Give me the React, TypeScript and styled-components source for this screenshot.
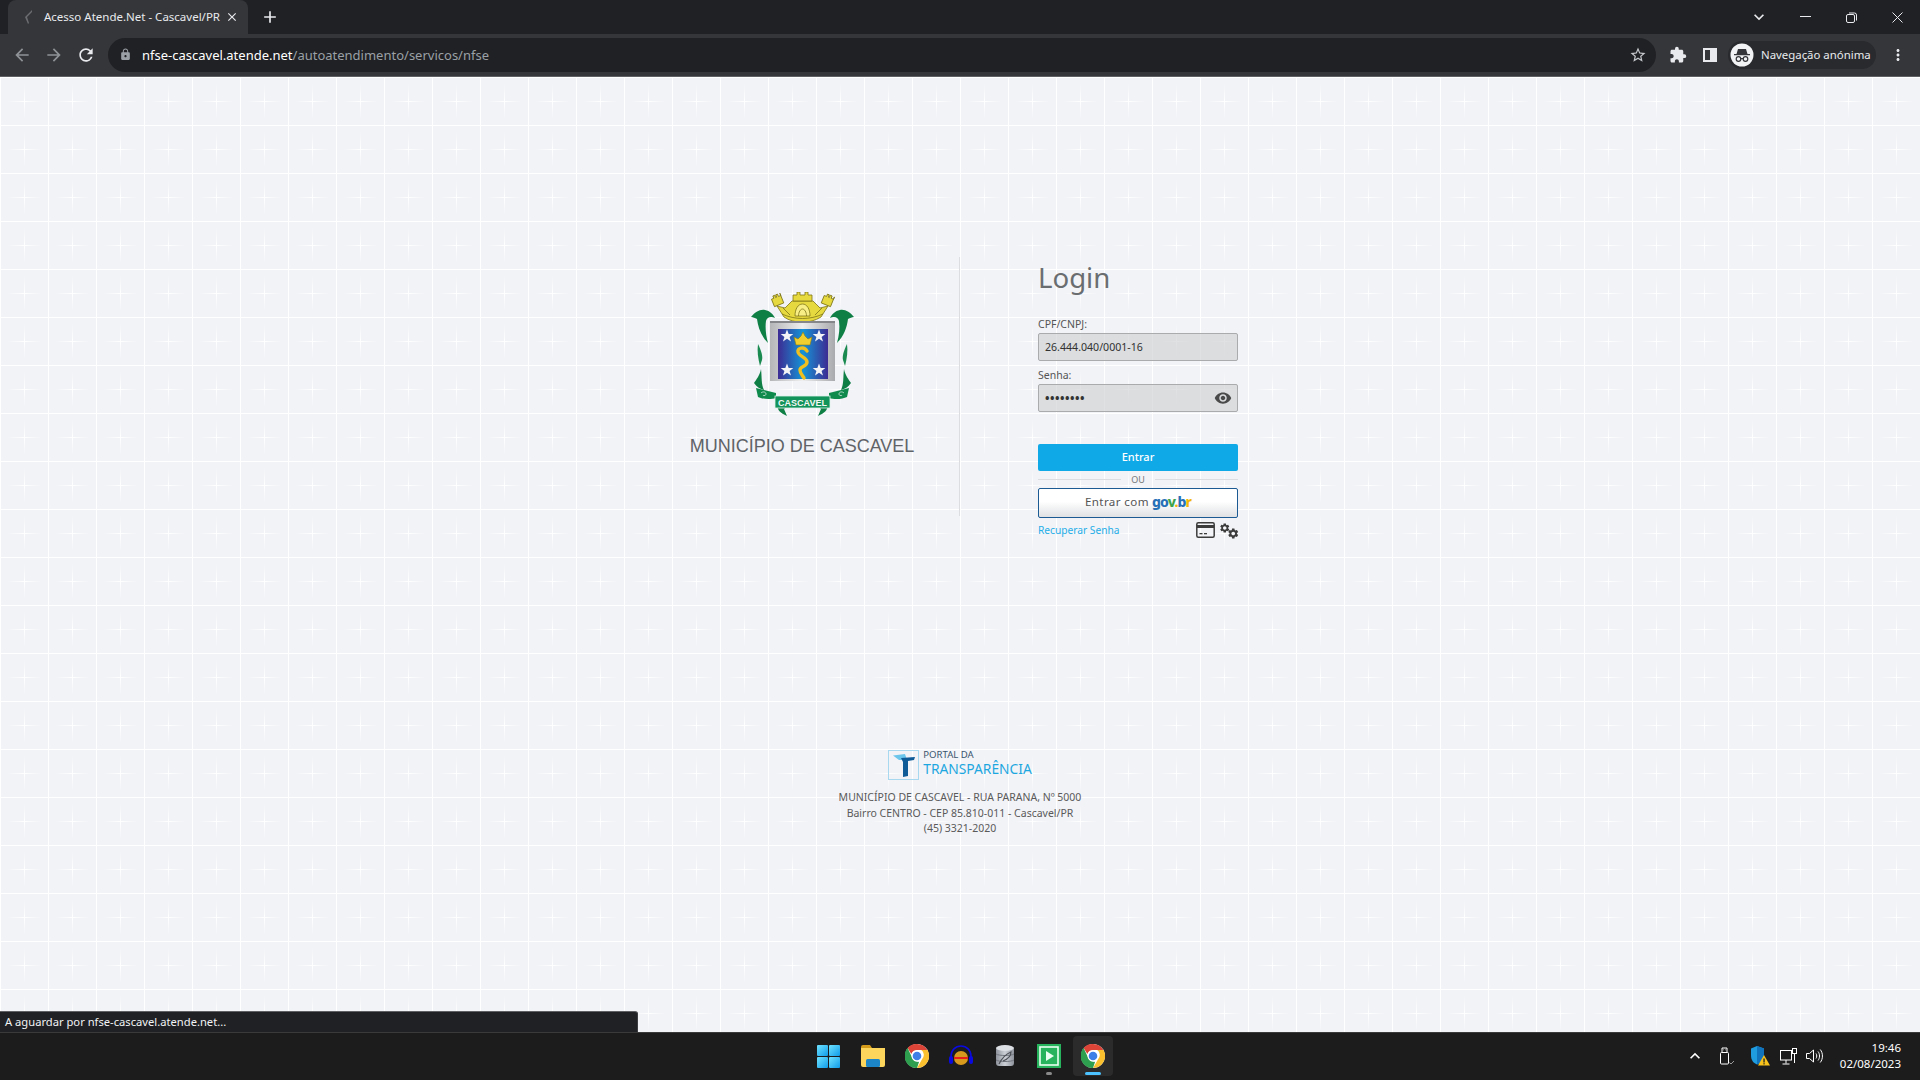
import React from "react";
import styled, { createGlobalStyle } from "styled-components";
import {
  MdArrowBack,
  MdArrowForward,
  MdClose,
  MdExtension,
  MdLock,
  MdMoreVert,
  MdRefresh,
  MdSettings,
  MdStarBorder,
  MdVisibility,
  MdAdd,
  MdKeyboardArrowDown,
  MdKeyboardArrowUp,
} from "react-icons/md";

const GlobalStyle = createGlobalStyle`
  html, body {
    margin: 0;
    padding: 0;
    background: #f2f3f7;
  }
  * { box-sizing: border-box; }
`;

const Screen = styled.div`
  position: relative;
  display: flex;
  flex-direction: column;
  width: 1920px;
  height: 1080px;
  overflow: hidden;
  font-family: "Noto Sans", sans-serif;
`;

/* ---- browser chrome ---- */

const TabStrip = styled.div`
  display: flex;
  align-items: flex-end;
  height: 34px;
  padding-left: 8px;
  background: #202124;
`;

const Tab = styled.div`
  display: flex;
  align-items: center;
  width: 240px;
  height: 34px;
  padding: 0 9px 1px 15px;
  background: #35363a;
  border-radius: 8px 8px 0 0;
  color: #e8eaed;
  font-size: 11.5px;
  white-space: nowrap;
`;

const TabTitle = styled.span`
  flex: 1;
  margin-left: 11px;
`;

const NewTab = styled.div`
  display: flex;
  align-items: center;
  justify-content: center;
  width: 20px;
  height: 34px;
  margin-left: 12px;
  color: #e8eaed;
  font-size: 20px;
`;

const WindowControls = styled.div`
  display: flex;
  align-items: center;
  height: 34px;
  margin-left: auto;
  color: #e8eaed;
`;

const WindowButton = styled.div<{ $w?: number }>`
  display: flex;
  align-items: center;
  justify-content: center;
  width: ${({ $w }) => $w ?? 46}px;
  height: 28px;
`;

const Toolbar = styled.div`
  display: flex;
  align-items: center;
  height: 43px;
  padding: 0 0 1px 6px;
  background: #35363a;
  border-bottom: 1px solid #5f6063;
`;

const NavButton = styled.div<{ $dim?: boolean }>`
  display: flex;
  align-items: center;
  justify-content: center;
  width: 32px;
  height: 32px;
  color: ${({ $dim }) => ($dim ? "#8f9296" : "#e8eaed")};
  font-size: 20px;
`;

const Omnibox = styled.div`
  display: flex;
  align-items: center;
  flex: 0 0 1548px;
  height: 34px;
  margin-left: 6px;
  padding: 0 9px 0 11px;
  background: #202124;
  border-radius: 17px;
  font-size: 13px;
  color: #9aa0a6;
`;

const LockIcon = styled(MdLock)`
  color: #9aa0a6;
  font-size: 13px;
  margin-right: 10px;
`;

const Host = styled.span`
  color: #fff;
`;

const StarIcon = styled(MdStarBorder)`
  margin-left: auto;
  color: #c5c8cc;
  font-size: 18px;
`;

const ToolIcon = styled.div<{ $ml: number }>`
  display: flex;
  align-items: center;
  justify-content: center;
  width: 20px;
  height: 20px;
  margin-left: ${({ $ml }) => $ml}px;
  color: #e8eaed;
  font-size: 18px;
`;

const ProfileChip = styled.div`
  display: flex;
  align-items: center;
  width: 148px;
  height: 28px;
  margin-left: 8px;
  padding-left: 2px;
  border-radius: 14px;
  background: #292a2d;
  color: #e8eaed;
  font-size: 11.4px;
  white-space: nowrap;
`;

const ProfileName = styled.span`
  margin-left: 7px;
`;

const SidePanelGlyph = styled.div`
  width: 14px;
  height: 14px;
  border: 2px solid #e8eaed;
  border-right-width: 7px;
  background: #35363a;
`;

/* ---- page ---- */

const Page = styled.main`
  flex: 1;
  display: flex;
  flex-direction: column;
  background-color: #f2f3f7;
  background-image:
    linear-gradient(90deg, #fff 1px, transparent 1px),
    linear-gradient(180deg, #fff 1px, transparent 1px),
    radial-gradient(ellipse 17px 1px at 24.5px 24.5px, #ffffff, rgba(255, 255, 255, 0)),
    radial-gradient(ellipse 1px 17px at 24.5px 24.5px, #ffffff, rgba(255, 255, 255, 0));
  background-size: 48px 48px;
`;

const LoginGrid = styled.section`
  display: grid;
  grid-template-columns: 1fr 1fr;
  align-items: start;
  margin-top: 180px;
  height: 259px;
`;

const BrandPanel = styled.div`
  justify-self: end;
  display: flex;
  flex-direction: column;
  align-items: center;
  width: 316px;
  height: 259px;
  padding: 35px 0 0 1px;
  border-right: 1px solid #dcdde1;
`;

const BrandName = styled.div`
  margin-top: 19px;
  color: #5f6368;
  font-family: "Liberation Sans", sans-serif;
  font-size: 18px;
  line-height: 22px;
  white-space: nowrap;
`;

const FormPanel = styled.div`
  display: flex;
  flex-direction: column;
  width: 278px;
  padding-left: 78px;
`;

const Title = styled.h1`
  margin: 0 0 17px;
  height: 41px;
  color: #6a6d70;
  font-size: 27.6px;
  font-weight: 400;
  line-height: 40px;
`;

const Field = styled.div`
  display: flex;
  flex-direction: column;
  margin-bottom: 5px;
`;

const Label = styled.label`
  height: 18px;
  color: #555;
  font-size: 10.5px;
  line-height: 18px;
`;

const InputBox = styled.div`
  display: flex;
  align-items: center;
  justify-content: space-between;
  height: 28px;
  padding: 0 5px 0 6px;
  background: rgba(205, 206, 209, 0.62);
  border: 1px solid #a9abad;
  border-radius: 2px;
  color: #333;
  font-size: 10.6px;
`;

const Dots = styled.span`
  font-size: 12px;
  font-weight: 700;
  letter-spacing: 0.5px;
`;

const EyeIcon = styled(MdVisibility)`
  color: #4a4a4a;
  font-size: 18px;
`;

const PrimaryButton = styled.button`
  height: 27px;
  margin-top: 27px;
  padding: 0 0 2px;
  background: #10a9e7;
  border: none;
  border-radius: 2px;
  color: #fff;
  font: 500 11px "Noto Sans", sans-serif;
`;

const OrRow = styled.div`
  display: flex;
  align-items: center;
  gap: 10px;
  height: 17px;
  padding-bottom: 1px;
  color: #777;
  font-size: 9px;

  &::before,
  &::after {
    content: "";
    flex: 1;
    height: 1px;
    background: #dcdde0;
  }
`;

const GovButton = styled.button`
  display: flex;
  align-items: center;
  justify-content: center;
  gap: 3px;
  height: 30px;
  padding: 0 0 3px;
  background: linear-gradient(180deg, #fff 45%, #dfe1e3 100%);
  border: 1px solid #1c5a94;
  border-radius: 2px;
  color: #555;
  font: 400 11.6px "Noto Sans", sans-serif;
  letter-spacing: 0.4px;
`;

const GovLogo = styled.span`
  font-family: "Noto Sans", sans-serif;
  font-size: 14px;
  font-weight: 800;
  letter-spacing: -0.9px;
`;

const GovLetter = styled.span<{ $c: string }>`
  color: ${({ $c }) => $c};
`;

const LinkRow = styled.div`
  display: flex;
  align-items: center;
  justify-content: space-between;
  height: 24px;
`;

const RecoverLink = styled.a`
  color: #26aee8;
  font-size: 10.2px;
`;

const RowIcons = styled.div`
  display: flex;
  align-items: center;
  gap: 4px;
  color: #3c3c3c;
`;

const GearPair = styled.div`
  display: flex;
  width: 20px;
  height: 20px;
  padding-top: 2px;
  margin-right: -1px;
`;

const GearSmall = styled(MdSettings)`
  font-size: 12px;
`;

const GearLarge = styled(MdSettings)`
  font-size: 13px;
  margin: 5px 0 0 -4px;
`;

const Footer = styled.footer`
  display: flex;
  flex-direction: column;
  align-items: center;
  margin-top: 234px;
`;

const PortalLogo = styled.div`
  display: flex;
  align-items: center;
  height: 30px;
  margin-bottom: 10px;
`;

const PortalMark = styled.div`
  display: flex;
  align-items: center;
  justify-content: center;
  width: 31px;
  height: 30px;
  border: 1px solid #a8d8ef;
`;

const PortalWords = styled.div`
  display: flex;
  flex-direction: column;
  margin-left: 4px;
  padding-bottom: 2px;
`;

const PortalSmall = styled.span`
  color: #39556e;
  font-size: 9.6px;
  line-height: 10px;
`;

const PortalBig = styled.span`
  color: #1da7e0;
  font-size: 13.8px;
  line-height: 18px;
`;

const Address = styled.div`
  color: #5a5a5a;
  font-size: 10.5px;
  line-height: 15.5px;
  text-align: center;
`;

const StatusBubble = styled.div`
  position: absolute;
  left: 0;
  bottom: 48px;
  width: 638px;
  height: 21px;
  padding-left: 5px;
  background: #202124;
  border-top: 1px solid #5f6063;
  border-right: 1px solid #3c3d40;
  border-top-right-radius: 3px;
  color: #f1f3f4;
  font-size: 11.2px;
  line-height: 19px;
`;

/* ---- taskbar ---- */

const Taskbar = styled.div`
  display: grid;
  grid-template-columns: 1fr auto 1fr;
  align-items: center;
  height: 48px;
  padding-bottom: 1px;
  background: #1c1c1c;
  border-top: 1px solid #3a3a3a;
`;

const TaskIcons = styled.div`
  grid-column: 2;
  display: flex;
  gap: 4px;
  margin-left: 1px;
`;

const TaskTile = styled.div<{ $active?: boolean }>`
  position: relative;
  display: flex;
  align-items: center;
  justify-content: center;
  width: 40px;
  height: 40px;
  border-radius: 4px;
  background: ${({ $active }) => ($active ? "#2b2b2b" : "transparent")};
`;

const RunDot = styled.span<{ $active?: boolean }>`
  position: absolute;
  left: 50%;
  bottom: 1px;
  width: ${({ $active }) => ($active ? 16 : 6)}px;
  height: 3px;
  margin-left: ${({ $active }) => ($active ? -8 : -3)}px;
  border-radius: 2px;
  background: ${({ $active }) => ($active ? "#4cc2ff" : "#8a8a8a")};
`;

const Tray = styled.div`
  grid-column: 3;
  justify-self: end;
  display: flex;
  align-items: center;
  padding-right: 19px;
  color: #fff;
`;

const TrayItem = styled.div<{ $w: number }>`
  display: flex;
  align-items: center;
  justify-content: center;
  width: ${({ $w }) => $w}px;
  height: 32px;
`;

const Clock = styled.div`
  width: 74px;
  color: #fff;
  font-size: 11.5px;
  line-height: 16px;
  text-align: right;
`;

/* ---- drawings ---- */

const ChromeLogo = ({ size = 24 }: { size?: number }) => (
  <svg width={size} height={size} viewBox="0 0 48 48">
    <circle cx="24" cy="24" r="24" fill="#fff" />
    <path d="M24 0a24 24 0 0 1 20.8 12H24a12 12 0 0 0-11.3 7.9L5.2 8.2A24 24 0 0 1 24 0z" fill="#db4437" />
    <path d="M44.8 12A24 24 0 0 1 24 48l10.4-18a12 12 0 0 0-2-18z" fill="#fbc02d" />
    <path d="M5.2 8.2 15.6 30a12 12 0 0 0 12.6 5.3L24 48A24 24 0 0 1 5.2 8.2z" fill="#2e9e4f" />
    <circle cx="24" cy="24" r="11" fill="#fff" />
    <circle cx="24" cy="24" r="8.6" fill="#3d7fe6" />
  </svg>
);

const Star = ({ x, y }: { x: number; y: number }) => (
  <polygon
    transform={`translate(${x} ${y})`}
    points="0,-6.5 1.7,-2 6.3,-2 2.6,0.9 4,5.5 0,2.8 -4,5.5 -2.6,0.9 -6.3,-2 -1.7,-2"
    fill="#f4f4f6"
  />
);

const MantleSide = () => (
  <g fill="#0f7f46">
    <path d="M1 25C5 20 10 17 15 18c5 1 8 4 10 8-4-2-8-1-9 3-1 7 0 15 2 22-7-7-10-16-11-24-2-1-4-2-6-2z" />
    <path d="M8 52c3 6 5 12 4 16l-2 6c-2-8-3-15-2-22z" fill="#1a8a50" />
    <path d="M11 77c-1 6-5 11-7 14 3 4 6 6 10 7-3-6-2-13-3-21z" />
    <path d="M6 96l20 5v5c-6 2-14 1-18-1z" fill="#0f8a4d" />
    <path d="M11 101c2-2 5-1 5 1s-3 2-3 1" fill="none" stroke="#cfe9da" strokeWidth="0.8" />
    <path d="M27 114c1 4 3 7 10 10l-3-7 3-3z" />
  </g>
);

const CrownTower = ({ x, tilt }: { x: number; tilt: number }) => (
  <g transform={`rotate(${tilt} ${x} 10)`}>
    <path d={`M${x - 5} 13V5h2.500V2.500h2V5h1V2.500h2V5h2.500V2.500h0V13z`} />
  </g>
);

const Emblem = () => (
  <svg width="105" height="124" viewBox="0 0 105 124">
    <defs>
      <linearGradient id="fieldBlue" x1="0" x2="1" y1="0" y2="0">
        <stop offset="0" stopColor="#3d2c93" />
        <stop offset="0.5" stopColor="#1594d6" />
        <stop offset="1" stopColor="#3d2c93" />
      </linearGradient>
      <linearGradient id="silver" x1="0" x2="1" y1="0" y2="0">
        <stop offset="0" stopColor="#b5b6b8" />
        <stop offset="0.5" stopColor="#eeeeef" />
        <stop offset="1" stopColor="#a9aaad" />
      </linearGradient>
    </defs>
    {/* crown */}
    <g fill="#e6d93f" stroke="#7d7518" strokeWidth="0.8">
      <CrownTower x={28} tilt={-22} />
      <CrownTower x={77} tilt={22} />
      <path d="M27 14l8 2 7-7h21l7 7 8-2-7 11c-11 7-27 7-37 0z" />
      <path d="M43 9V3h4V0h3v3h5V0h3v3h4v6z" />
      <path d="M45 24c0-7 3-12 7.500-12S60 17 60 24z" fill="#f8ee86" />
      <path d="M48.500 24c0-4 2-7 4-7s4 3 4 7M33 16l7 7M72 16l-7 7M32 22c13 6 28 6 41 0" fill="none" />
    </g>
    {/* mantling, the right side mirrors the left */}
    <MantleSide />
    <g transform="translate(105 0) scale(-1 1)">
      <MantleSide />
    </g>
    {/* shield */}
    <rect x="20" y="29" width="65" height="60" fill="url(#silver)" />
    <rect x="20" y="29" width="65" height="2" fill="#85868a" />
    <rect x="28" y="37" width="50" height="50" fill="url(#fieldBlue)" />
    <Star x={37} y={44} />
    <Star x={69} y={44} />
    <Star x={37} y={78} />
    <Star x={69} y={78} />
    <path d="M44 45l4 2 3-3 2-4 2 4 3 3 4-2-2 8H46z" fill="#f0cf2f" stroke="#8d7b12" strokeWidth="0.6" />
    <path d="M57 59c-3-5-10-3-9 1 1 5 9 5 9 10 0 5-7 4-7 8 0 4 3 6 4 8" fill="none" stroke="#f0c020" strokeWidth="3.400" strokeLinecap="round" />
    {/* ribbon label */}
    <rect x="25" y="104" width="55" height="12" fill="#12935a" stroke="#dff3e8" strokeWidth="0.8" />
    <text x="52.500" y="113.500" textAnchor="middle" fontFamily="Liberation Sans, sans-serif" fontWeight="700" fontSize="9" fill="#f2f7f4">
      CASCAVEL
    </text>
  </svg>
);

const CardGlyph = () => (
  <svg width="19" height="16" viewBox="0 0 19 16">
    <rect x="0.800" y="0.800" width="17.400" height="14.400" rx="1.500" fill="none" stroke="#3c3c3c" strokeWidth="1.500" />
    <rect x="1" y="3" width="17" height="3" fill="#3c3c3c" />
    <rect x="3.500" y="11" width="3" height="1.300" fill="#3c3c3c" />
    <rect x="8" y="11" width="3" height="1.300" fill="#3c3c3c" />
  </svg>
);

const PortalGlyph = () => (
  <svg width="22" height="26" viewBox="0 0 22 26">
    <path d="M0 3.500 12 2l2 6H6z" fill="#6cc6ec" />
    <path d="M8 6l14-1-1 3-6 1v15l-5 1V10z" fill="#0f5b98" />
  </svg>
);

const SideSpinner = () => (
  <svg width="10" height="16" viewBox="0 0 10 16">
    <path d="M9 1 2 8l3 7 1-1-2-6 5-5z" fill="#6b6d70" />
  </svg>
);

const IncognitoAvatar = () => (
  <svg width="24" height="24" viewBox="0 0 24 24">
    <circle cx="12" cy="12" r="11.500" fill="#f1f3f4" />
    <path d="M8 6h8l1.500 5H20v1.200H4V11h2.500z" fill="#35363a" />
    <circle cx="8.500" cy="16" r="2.300" fill="none" stroke="#35363a" strokeWidth="1.200" />
    <circle cx="15.500" cy="16" r="2.300" fill="none" stroke="#35363a" strokeWidth="1.200" />
    <path d="M10.800 15.600h2.400" stroke="#35363a" strokeWidth="1.200" />
  </svg>
);

const RestoreGlyph = () => (
  <svg width="11" height="11" viewBox="0 0 11 11" fill="none" stroke="#e8eaed" strokeWidth="1">
    <rect x="0.500" y="2.500" width="8" height="8" rx="1.500" />
    <path d="M3 1h5.500a2 2 0 0 1 2 2v5.500" />
  </svg>
);

const MinimizeGlyph = () => (
  <svg width="11" height="2" viewBox="0 0 11 2">
    <rect width="11" height="1" fill="#e8eaed" />
  </svg>
);

const CloseGlyph = () => (
  <svg width="11" height="11" viewBox="0 0 11 11" stroke="#e8eaed" strokeWidth="1">
    <path d="M.5.5l10 10M10.500.5l-10 10" />
  </svg>
);

const WindowsLogo = () => (
  <svg width="23" height="23" viewBox="0 0 23 23">
    <defs>
      <linearGradient id="win" x1="0" y1="0" x2="1" y2="1">
        <stop offset="0" stopColor="#6fe3ff" />
        <stop offset="1" stopColor="#0f9be8" />
      </linearGradient>
    </defs>
    <rect width="11" height="11" rx="1" fill="url(#win)" />
    <rect x="12" width="11" height="11" rx="1" fill="url(#win)" />
    <rect y="12" width="11" height="11" rx="1" fill="url(#win)" />
    <rect x="12" y="12" width="11" height="11" rx="1" fill="url(#win)" />
  </svg>
);

const FolderIcon = () => (
  <svg width="24" height="22" viewBox="0 0 24 22">
    <path d="M0 2a2 2 0 0 1 2-2h7l2 3h-11z" fill="#d49b1a" />
    <path d="M0 3h24v17a2 2 0 0 1-2 2H2a2 2 0 0 1-2-2z" fill="#fcd65c" />
    <rect x="5" y="14" width="14" height="8" rx="1.500" fill="#1b85c8" />
  </svg>
);

const AudioIcon = () => (
  <svg width="24" height="22" viewBox="0 0 24 22">
    <circle cx="12" cy="13" r="7" fill="#d89a1d" />
    <path d="M5 12h14v2H5z" fill="#e8201a" />
    <path d="M2 15V11a10 10 0 0 1 20 0v4" fill="none" stroke="#0a0ae0" strokeWidth="1.600" />
    <rect x="0" y="11" width="4" height="8" rx="2" fill="#0a0ae0" />
    <rect x="20" y="11" width="4" height="8" rx="2" fill="#0a0ae0" />
  </svg>
);

const DatabaseIcon = () => (
  <svg width="18" height="23" viewBox="0 0 18 23">
    <defs>
      <linearGradient id="dbBody" x1="0" x2="1" y1="0" y2="0">
        <stop offset="0" stopColor="#8e939c" />
        <stop offset="0.5" stopColor="#ccd0d6" />
        <stop offset="1" stopColor="#8e939c" />
      </linearGradient>
    </defs>
    <rect y="2" width="18" height="19" rx="3" fill="url(#dbBody)" />
    <ellipse cx="9" cy="3" rx="9" ry="3" fill="#dcdfe4" />
    <path d="M0 9c3 2 15 2 18 0M0 15c3 2 15 2 18 0" stroke="#70747c" fill="none" />
    <path d="M3 19C6 13 10 9 15 7c0 4-3 7-8 9" fill="none" stroke="#4d5057" strokeWidth="1.200" />
  </svg>
);

const PlayerIcon = () => (
  <svg width="24" height="24" viewBox="0 0 24 24">
    <rect width="24" height="24" fill="#27b35d" />
    <rect x="3" y="3" width="18" height="18" fill="none" stroke="#eafff2" strokeWidth="1.600" />
    <path d="M9 7l8 5-8 5z" fill="#eafff2" />
  </svg>
);

const UsbIcon = () => (
  <svg width="16" height="18" viewBox="0 0 16 18" fill="none" stroke="#fff" strokeWidth="1">
    <rect x="1.500" y="5.500" width="8" height="11.500" rx="1" />
    <path d="M3 5.500V1h5v4.500M4.500 2.800h.5M6.500 2.800H7" />
    <path d="M10.500 15.500l1.500 1.500 3-3" stroke="#9a9a9a" />
  </svg>
);

const ShieldIcon = () => (
  <svg width="20" height="20" viewBox="0 0 20 20">
    <path d="M1 2.500 7 0l7 2.500V9c0 5-3 8-7 9.500C3 17 1 14 1 9z" fill="#1f9be0" />
    <path d="M7 0l7 2.500V9c0 5-3 8-7 9.500z" fill="#1273bd" />
    <path d="M14 9l6 10.500H8z" fill="#f7c21b" />
    <rect x="13.400" y="12.500" width="1.300" height="4" fill="#222" />
    <rect x="13.400" y="17.200" width="1.300" height="1.200" fill="#222" />
  </svg>
);

const NetworkIcon = () => (
  <svg width="18" height="17" viewBox="0 0 18 17" fill="none" stroke="#fff" strokeWidth="1">
    <rect x="0.500" y="2.500" width="11" height="9.500" />
    <path d="M6 12v3.500M2.500 16h7" />
    <rect x="12.500" y="0.500" width="4" height="5" fill="#1c1c1c" />
    <path d="M14.500 5.500V15" />
  </svg>
);

const SpeakerIcon = () => (
  <svg width="17" height="16" viewBox="0 0 17 16" fill="none" stroke="#fff" strokeWidth="1">
    <path d="M.5 5.500h3L7.500 2v12l-4-3.500h-3z" />
    <path d="M10 5.500c1 1.500 1 3.500 0 5M12 3.500c2 2.500 2 6.500 0 9M14.200 1.500c3 3.500 3 9.500 0 13" />
  </svg>
);

const App = () => (
  <>
    <GlobalStyle />
    <Screen>
      <TabStrip>
        <Tab>
          <SideSpinner />
          <TabTitle>Acesso Atende.Net - Cascavel/PR</TabTitle>
          <MdClose size={14} />
        </Tab>
        <NewTab>
          <MdAdd />
        </NewTab>
        <WindowControls>
          <WindowButton $w={46}>
            <MdKeyboardArrowDown size={20} />
          </WindowButton>
          <WindowButton>
            <MinimizeGlyph />
          </WindowButton>
          <WindowButton>
            <RestoreGlyph />
          </WindowButton>
          <WindowButton>
            <CloseGlyph />
          </WindowButton>
        </WindowControls>
      </TabStrip>

      <Toolbar>
        <NavButton $dim>
          <MdArrowBack />
        </NavButton>
        <NavButton $dim>
          <MdArrowForward />
        </NavButton>
        <NavButton>
          <MdRefresh />
        </NavButton>
        <Omnibox>
          <LockIcon />
          <Host>nfse-cascavel.atende.net</Host>/autoatendimento/servicos/nfse
          <StarIcon />
        </Omnibox>
        <ToolIcon $ml={12}>
          <MdExtension />
        </ToolIcon>
        <ToolIcon $ml={12}>
          <SidePanelGlyph />
        </ToolIcon>
        <ProfileChip>
          <IncognitoAvatar />
          <ProfileName>Navegação anónima</ProfileName>
        </ProfileChip>
        <ToolIcon $ml={12}>
          <MdMoreVert />
        </ToolIcon>
      </Toolbar>

      <Page>
        <LoginGrid>
          <BrandPanel>
            <Emblem />
            <BrandName>MUNICÍPIO DE CASCAVEL</BrandName>
          </BrandPanel>
          <FormPanel>
            <Title>Login</Title>
            <Field>
              <Label>CPF/CNPJ:</Label>
              <InputBox>26.444.040/0001-16</InputBox>
            </Field>
            <Field>
              <Label>Senha:</Label>
              <InputBox>
                <Dots>••••••••</Dots>
                <EyeIcon />
              </InputBox>
            </Field>
            <PrimaryButton>Entrar</PrimaryButton>
            <OrRow>OU</OrRow>
            <GovButton>
              Entrar com
              <GovLogo>
                <GovLetter $c="#2670b8">g</GovLetter>
                <GovLetter $c="#2670b8">o</GovLetter>
                <GovLetter $c="#3fa34d">v</GovLetter>
                <GovLetter $c="#f2b705">.</GovLetter>
                <GovLetter $c="#2670b8">b</GovLetter>
                <GovLetter $c="#f2b705">r</GovLetter>
              </GovLogo>
            </GovButton>
            <LinkRow>
              <RecoverLink>Recuperar Senha</RecoverLink>
              <RowIcons>
                <CardGlyph />
                <GearPair>
                  <GearSmall />
                  <GearLarge />
                </GearPair>
              </RowIcons>
            </LinkRow>
          </FormPanel>
        </LoginGrid>

        <Footer>
          <PortalLogo>
            <PortalMark>
              <PortalGlyph />
            </PortalMark>
            <PortalWords>
              <PortalSmall>PORTAL DA</PortalSmall>
              <PortalBig>TRANSPARÊNCIA</PortalBig>
            </PortalWords>
          </PortalLogo>
          <Address>
            MUNICÍPIO DE CASCAVEL - RUA PARANA, Nº 5000
            <br />
            Bairro CENTRO - CEP 85.810-011 - Cascavel/PR
            <br />
            (45) 3321-2020
          </Address>
        </Footer>
      </Page>

      <StatusBubble>A aguardar por nfse-cascavel.atende.net...</StatusBubble>

      <Taskbar>
        <TaskIcons>
          <TaskTile>
            <WindowsLogo />
          </TaskTile>
          <TaskTile>
            <FolderIcon />
          </TaskTile>
          <TaskTile>
            <ChromeLogo />
          </TaskTile>
          <TaskTile>
            <AudioIcon />
          </TaskTile>
          <TaskTile>
            <DatabaseIcon />
          </TaskTile>
          <TaskTile>
            <PlayerIcon />
            <RunDot />
          </TaskTile>
          <TaskTile $active>
            <ChromeLogo />
            <RunDot $active />
          </TaskTile>
        </TaskIcons>
        <Tray>
          <TrayItem $w={31}>
            <MdKeyboardArrowUp size={20} />
          </TrayItem>
          <TrayItem $w={33}>
            <UsbIcon />
          </TrayItem>
          <TrayItem $w={34}>
            <ShieldIcon />
          </TrayItem>
          <TrayItem $w={24}>
            <NetworkIcon />
          </TrayItem>
          <TrayItem $w={26}>
            <SpeakerIcon />
          </TrayItem>
          <Clock>
            19:46
            <br />
            02/08/2023
          </Clock>
        </Tray>
      </Taskbar>
    </Screen>
  </>
);

export default App;
